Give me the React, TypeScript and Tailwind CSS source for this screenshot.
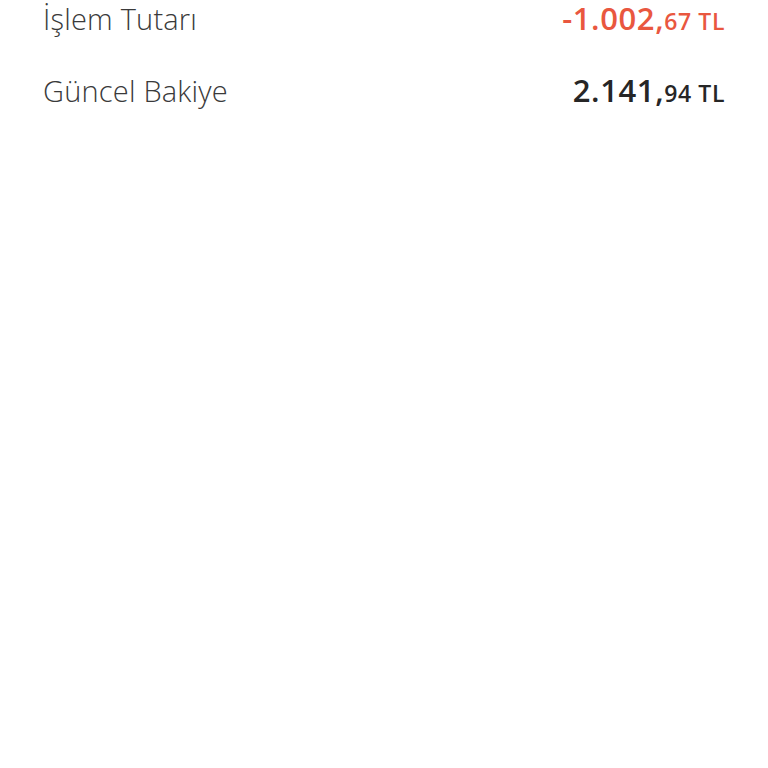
const rows = [
  { label: 'İşlem Tutarı', whole: '-1.002,', cents: '67', negative: true },
  { label: 'Güncel Bakiye', whole: '2.141,', cents: '94', negative: false },
]

export default function App() {
  return (
    <div className="min-h-[768px] w-full bg-white px-[43px] font-['Open_Sans',sans-serif]">
      {rows.map((row) => (
        <div key={row.label} className="flex h-[72px] items-baseline justify-between first:-mt-[2px]">
          <span className="text-[29px] font-light leading-[40px] tracking-[0.2px] text-[#3a3a3a]">
            {row.label}
          </span>
          <span
            className={`leading-[40px] font-semibold tracking-[0.6px] ${
              row.negative ? 'text-[#e9573f]' : 'text-[#262626]'
            }`}
          >
            <span className="text-[31px]">{row.whole}</span>
            <span className="text-[23px]">{row.cents} TL</span>
          </span>
        </div>
      ))}
    </div>
  )
}
